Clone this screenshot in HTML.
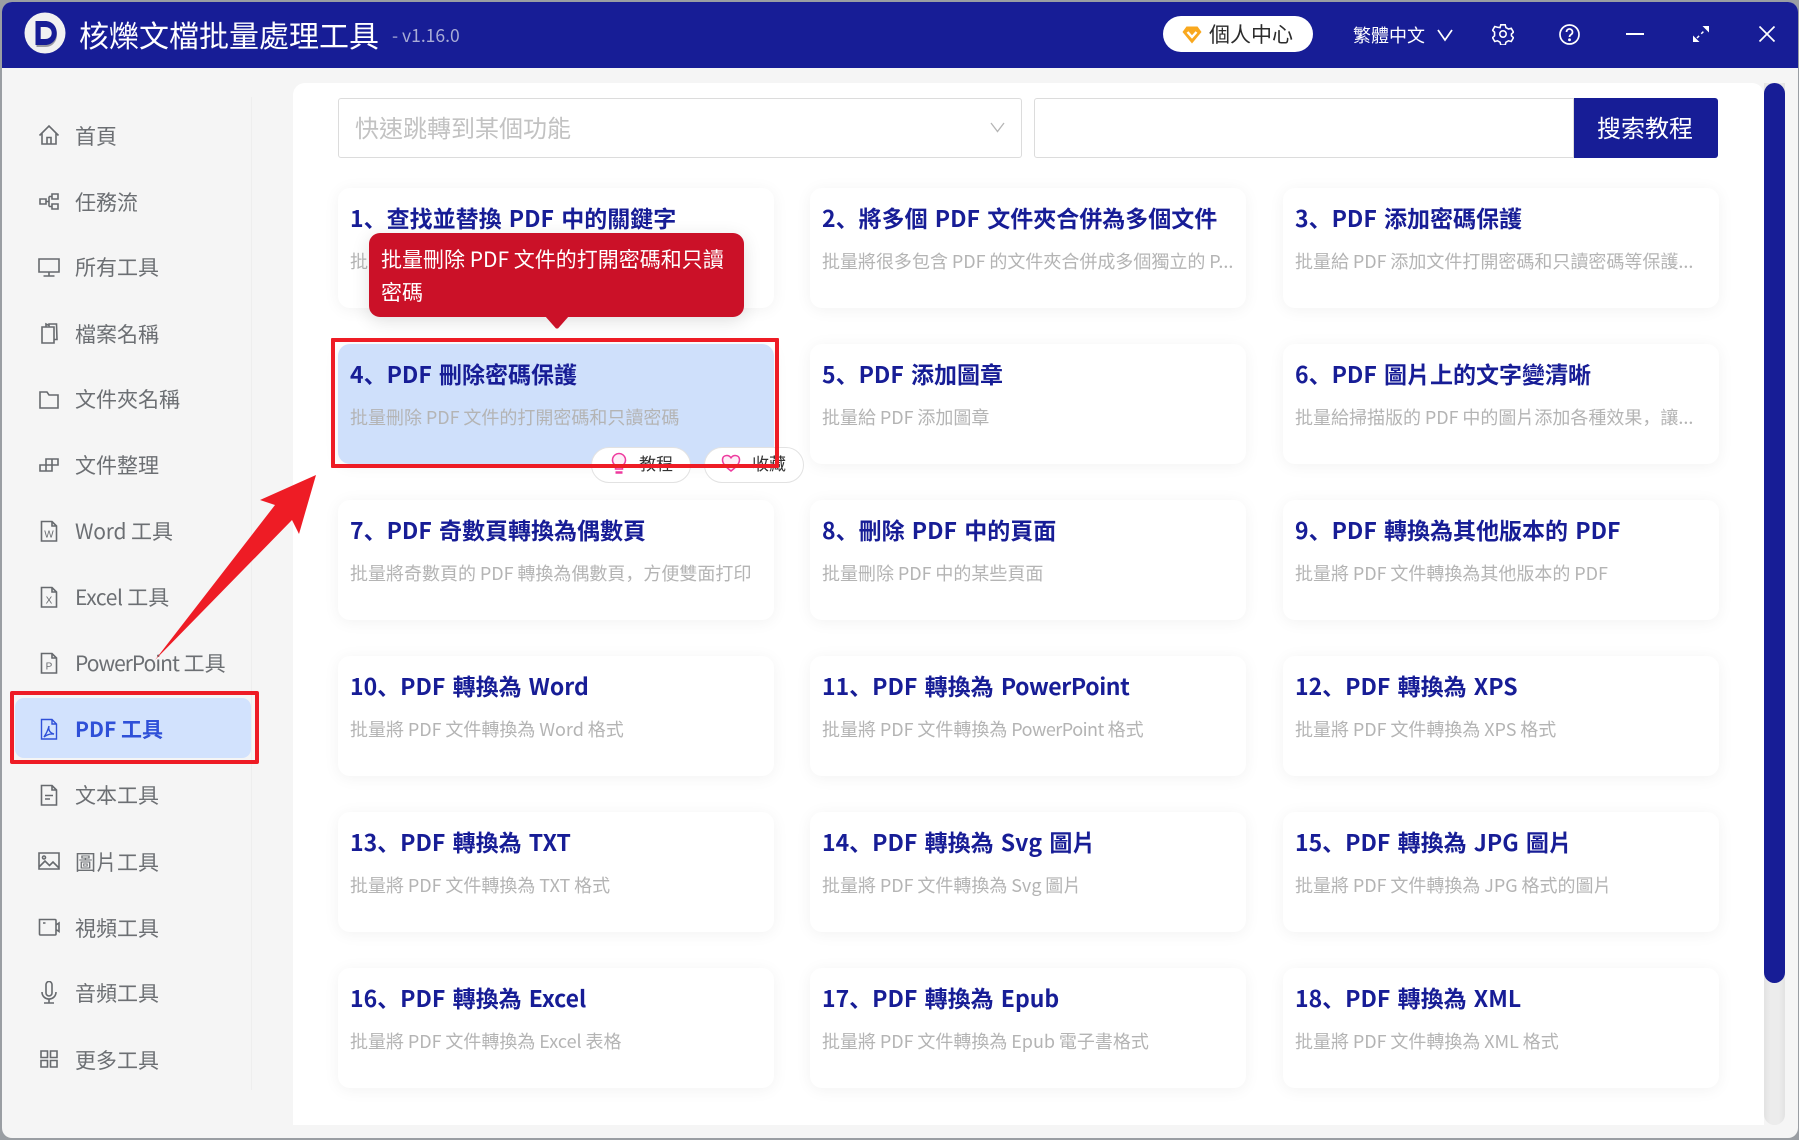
<!DOCTYPE html>
<html lang="zh-TW">
<head>
<meta charset="utf-8">
<title>核爍文檔批量處理工具</title>
<style>
*{box-sizing:border-box;margin:0;padding:0}
html,body{width:1799px;height:1140px;overflow:hidden;background:#9a9ea3}
body{position:relative;font-family:"Noto Sans CJK TC","Liberation Sans",sans-serif}
#win{position:absolute;left:2px;top:2px;width:1796px;height:1136px;background:#f5f5f5;border-radius:10px;overflow:hidden}
#hdr{position:absolute;left:2px;top:2px;width:1796px;height:66px;background:#171d96;border-radius:10px 10px 0 0}
.t{position:absolute;white-space:nowrap;line-height:1}
#panel{position:absolute;left:293px;top:83px;width:1471px;height:1042px;background:#fff;border-radius:12px 12px 0 0;overflow:hidden}
.card{position:absolute;width:436px;height:120px;background:#fff;border-radius:12px;box-shadow:0 2px 16px rgba(0,0,0,.055)}
.card b{position:absolute;left:12px;top:14px;font-size:23px;line-height:30px;font-weight:700;color:#171d96;white-space:nowrap;word-spacing:2px}
.card span{position:absolute;left:12px;top:60px;font-size:18px;line-height:26px;color:#b4b4b4;white-space:nowrap;word-spacing:-.2px}
.card i{font-style:normal;font-family:"Noto Sans CJK JP",sans-serif}
.card u{text-decoration:none}
.nav{position:absolute;left:75px;font-size:21px;line-height:30px;color:#6c6f73;white-space:nowrap;font-weight:400}
.ic{position:absolute;left:37px;width:24px;height:24px;fill:none;stroke:#676a6e;stroke-width:1.6}
.hi{position:absolute;fill:none;stroke:#fff;stroke-width:1.7}
.pill{position:absolute;height:36px;background:#fff;border:1px solid #e2e2e2;border-radius:18px}
</style>
</head>
<body>
<div id="win"></div>
<div id="hdr"></div>

<!-- logo -->
<svg style="position:absolute;left:24px;top:12px" width="42" height="42" viewBox="0 0 42 42">
<circle cx="21" cy="21" r="20.500" fill="#f1f1f1"/>
<path d="M12.500 11h9c7 0 11.500 4.700 11.500 11.500S28.500 35 21.500 35h-9z" fill="#9a9aa2"/>
<path d="M11.500 9h9.500c7 0 11.700 5 11.700 12S28 33 21 33h-9.500z" fill="#171d96"/>
<path d="M16.700 15h4.300c4 0 6.700 2.400 6.700 6s-2.700 6-6.700 6h-4.300z" fill="#f1f1f1"/>
</svg>
<div class="t" style="left:79px;top:19px;font-size:30px;color:#fff">核爍文檔批量處理工具</div>
<div class="t" style="left:392px;top:27px;font-size:17.500px;color:#a9acd6">- v1.16.0</div>

<!-- account pill -->
<div style="position:absolute;left:1163px;top:16px;width:150px;height:36px;background:#fff;border-radius:18px"></div>
<svg style="position:absolute;left:1182px;top:25px" width="20" height="20" viewBox="0 0 20 20">
<path d="M4.500 1.500h11l4 5.500L10 18.500.5 7z" fill="#f9a81e"/>
<path d="M5.500 7L10 12l4.500-5" fill="none" stroke="#fff" stroke-width="2.400"/>
</svg>
<div class="t" style="left:1209px;top:24px;font-size:21px;color:#2b2b2b">個人中心</div>

<div class="t" style="left:1353px;top:26px;font-size:18px;color:#fff">繁體中文</div>
<svg class="hi" style="left:1436px;top:28px" width="18" height="14" viewBox="0 0 18 14"><path d="M2 2l7 10 7-10"/></svg>
<!-- gear -->
<svg class="hi" style="left:1492px;top:23px" width="22" height="22" viewBox="0 0 24 24">
<path d="M9.600 2h4.800l.8 3 2.800 1.600 3-.8 2.400 4.200-2.200 2v2l2.200 2-2.400 4.200-3-.8-2.800 1.600-.8 3H9.600l-.8-3-2.800-1.600-3 .8L.6 16l2.200-2v-4L.6 8l2.400-4.200 3 .8L8.800 5z"/>
<circle cx="12" cy="12" r="3.500"/>
</svg>
<!-- help -->
<svg class="hi" style="left:1559px;top:24px" width="21" height="21" viewBox="0 0 21 21">
<circle cx="10.500" cy="10.500" r="9.500"/>
<path d="M7.500 8a3 3 0 1 1 4.600 2.500c-1.100.7-1.600 1.300-1.600 2.500"/>
<circle cx="10.500" cy="15.800" r=".6" fill="#fff"/>
</svg>
<!-- min -->
<svg class="hi" style="left:1626px;top:32px" width="18" height="4" viewBox="0 0 18 4"><path d="M0 2h18" stroke-width="2"/></svg>
<!-- expand -->
<svg style="position:absolute;left:1692px;top:25px" width="18" height="18" viewBox="0 0 18 18">
<path d="M5 13L13 5" stroke="#fff" stroke-width="1.500" stroke-dasharray="3 3"/>
<path d="M10.500 1H17v6.500z M1 10.500V17h6.500z" fill="#fff"/>
</svg>
<!-- close -->
<svg class="hi" style="left:1759px;top:26px" width="16" height="16" viewBox="0 0 16 16"><path d="M.5.500l15 15M15.500.500l-15 15"/></svg>

<!-- sidebar divider -->
<div style="position:absolute;left:251px;top:97px;width:1px;height:993px;background:#eeeeee"></div>

<!-- sidebar -->
<svg class="ic" style="top:123px" viewBox="0 0 24 24"><path d="M2.500 12.500L12 3l9.500 9.500M5 10.500V21h14V10.500M10 21v-6.500h4V21"/></svg>
<div class="nav" style="top:121px">首頁</div>
<svg class="ic" style="top:189px" viewBox="0 0 24 24"><path d="M3 10h6v5H3zM15 5h6v5h-6zM15 15h6v5h-6zM9 12.500h3M12 7.500v10M12 7.500h3M12 17.500h3"/></svg>
<div class="nav" style="top:187px">任務流</div>
<svg class="ic" style="top:255px" viewBox="0 0 24 24"><path d="M2 4h20v13H2zM12 17v4M6.500 21h11"/></svg>
<div class="nav" style="top:252px">所有工具</div>
<svg class="ic" style="top:321px" viewBox="0 0 24 24"><path d="M5 6h12v16H5zM9 6V3l3 1.500V3h7.500l.5 15.500h-3M9 6"/></svg>
<div class="nav" style="top:319px">檔案名稱</div>
<svg class="ic" style="top:387px" viewBox="0 0 24 24"><path d="M3 5h7l2 3h9v13H3z"/></svg>
<div class="nav" style="top:384px">文件夾名稱</div>
<svg class="ic" style="top:452px" viewBox="0 0 24 24"><path d="M9 7h6v6H9zM15 7h6v6h-6zM3 13h6v6H3zM9 13h6v6H9z"/></svg>
<div class="nav" style="top:450px">文件整理</div>
<svg class="ic" style="top:519px" viewBox="0 0 24 24"><path d="M4.500 2.500H15L19.500 7v15h-15zM15 2.500V7h4.500"/><text x="12" y="18.500" font-size="10" text-anchor="middle" fill="#676a6e" stroke="none" font-family="Liberation Sans">W</text></svg>
<div class="nav" style="top:516px"><span style="letter-spacing:-.2px">Word</span> 工具</div>
<svg class="ic" style="top:585px" viewBox="0 0 24 24"><path d="M4.500 2.500H15L19.500 7v15h-15zM15 2.500V7h4.500"/><text x="12" y="18.500" font-size="10" text-anchor="middle" fill="#676a6e" stroke="none" font-family="Liberation Sans">X</text></svg>
<div class="nav" style="top:582px"><span style="letter-spacing:-.4px">Excel</span> 工具</div>
<svg class="ic" style="top:651px" viewBox="0 0 24 24"><path d="M4.500 2.500H15L19.500 7v15h-15zM15 2.500V7h4.500"/><text x="12" y="18.500" font-size="10" text-anchor="middle" fill="#676a6e" stroke="none" font-family="Liberation Sans">P</text></svg>
<div class="nav" style="top:648px"><span style="letter-spacing:-1px">PowerPoint</span> 工具</div>

<div style="position:absolute;left:15px;top:698px;width:236px;height:60px;background:#d2e2fd;border-radius:9px"></div>
<svg class="ic" style="top:717px;stroke:#2f50d8" viewBox="0 0 24 24"><path d="M4.500 2.500H15L19.500 7v15h-15zM15 2.500V7h4.500M12 9c-1 4 1 7 5 8-4-.5-7 .5-10 3 2-3 4-7 5-11z" stroke-width="1.400"/></svg>
<div class="nav" style="top:714px;color:#2f50d8;font-weight:700">PDF 工具</div>
<div style="position:absolute;left:10px;top:691px;width:249px;height:73px;border:4.500px solid #ee1c25;border-radius:2px"></div>

<svg class="ic" style="top:783px" viewBox="0 0 24 24"><path d="M4.500 2.500H15L19.500 7v15h-15zM15 2.500V7h4.500M8 12.500h8M8 16h5"/></svg>
<div class="nav" style="top:780px">文本工具</div>
<svg class="ic" style="top:849px" viewBox="0 0 24 24"><path d="M2 4h20v16H2zM2 18l6-6 4.500 4.500 3.500-3.500 6 6"/><circle cx="7" cy="8.500" r="1.500"/></svg>
<div class="nav" style="top:847px">圖片工具</div>
<svg class="ic" style="top:915px" viewBox="0 0 24 24"><path d="M2.500 4.500h15.500a1 1 0 0 1 1 1V19a1 1 0 0 1-1 1H3.500a1 1 0 0 1-1-1zM19 10l3-2v8.500l-3-2M6 8h2.500"/></svg>
<div class="nav" style="top:913px">視頻工具</div>
<svg class="ic" style="top:981px" viewBox="0 0 24 24"><path d="M9 3.500a3 3 0 0 1 6 0V12a3 3 0 0 1-6 0zM5 11c0 4 3 7 7 7s7-3 7-7M12 18v4M7 22h10"/></svg>
<div class="nav" style="top:978px">音頻工具</div>
<svg class="ic" style="top:1047px" viewBox="0 0 24 24"><path d="M4 4h6.500v6.500H4zM13.500 4H20v6.500h-6.500zM4 13.500h6.500V20H4zM13.500 13.500H20V20h-6.500z"/></svg>
<div class="nav" style="top:1045px">更多工具</div>

<!-- panel -->
<div id="panel">
  <div style="position:absolute;left:45px;top:15px;width:684px;height:60px;background:#fff;border:1px solid #dcdcdc;border-radius:3px"></div>
  <div class="t" style="left:62px;top:32px;font-size:24px;color:#c2c2c2">快速跳轉到某個功能</div>
  <svg style="position:absolute;left:697px;top:39px" width="15" height="11" viewBox="0 0 15 11"><path d="M1 1l6.500 8.500L14 1" fill="none" stroke="#b5b5b5" stroke-width="1.300"/></svg>
  <div style="position:absolute;left:741px;top:15px;width:540px;height:60px;background:#fff;border:1px solid #dcdcdc;border-radius:3px 0 0 3px"></div>
  <div style="position:absolute;left:1281px;top:15px;width:144px;height:60px;background:#171d96;border-radius:0 3px 3px 0"></div>
  <div class="t" style="left:1304px;top:32px;font-size:24px;color:#fff">搜索教程</div>

  <div class="card" style="left:45px;top:105px"><b>1<i lang="ja">、</i>查找並替換 PDF 中的關鍵字</b><span>批</span></div>
  <div class="card" style="left:517px;top:105px"><b>2<i lang="ja">、</i>將多個 PDF 文件夾合併為多個文件</b><span>批量將很多包含 PDF 的文件夾合併成多個獨立的 P...</span></div>
  <div class="card" style="left:990px;top:105px"><b>3<i lang="ja">、</i>PDF 添加密碼保護</b><span>批量給 PDF 添加文件打開密碼和只讀密碼等保護...</span></div>

  <div class="card" style="left:45px;top:261px;background:#cfe0fb"><b>4<i lang="ja">、</i>PDF 刪除密碼保護</b><span>批量刪除 PDF 文件的打開密碼和只讀密碼</span></div>
  <div class="card" style="left:517px;top:261px"><b>5<i lang="ja">、</i>PDF 添加圖章</b><span>批量給 PDF 添加圖章</span></div>
  <div class="card" style="left:990px;top:261px"><b>6<i lang="ja">、</i>PDF 圖片上的文字變清晰</b><span>批量給掃描版的 PDF 中的圖片添加各種效果<i lang="ja">，</i>讓...</span></div>

  <div class="card" style="left:45px;top:417px"><b>7<i lang="ja">、</i>PDF 奇數頁轉換為偶數頁</b><span>批量將奇數頁的 PDF 轉換為偶數頁<i lang="ja">，</i>方便雙面打印</span></div>
  <div class="card" style="left:517px;top:417px"><b>8<i lang="ja">、</i>刪除 PDF 中的頁面</b><span>批量刪除 PDF 中的某些頁面</span></div>
  <div class="card" style="left:990px;top:417px"><b>9<i lang="ja">、</i>PDF 轉換為其他版本的 PDF</b><span>批量將 PDF 文件轉換為其他版本的 PDF</span></div>

  <div class="card" style="left:45px;top:573px"><b>10<i lang="ja">、</i>PDF 轉換為 Word</b><span>批量將 PDF 文件轉換為 Word 格式</span></div>
  <div class="card" style="left:517px;top:573px"><b>11<i lang="ja">、</i>PDF 轉換為 <u style="letter-spacing:-.4px">PowerPoint</u></b><span>批量將 PDF 文件轉換為 <u style="letter-spacing:-.5px">PowerPoint</u> 格式</span></div>
  <div class="card" style="left:990px;top:573px"><b>12<i lang="ja">、</i>PDF 轉換為 XPS</b><span>批量將 PDF 文件轉換為 XPS 格式</span></div>

  <div class="card" style="left:45px;top:729px"><b>13<i lang="ja">、</i>PDF 轉換為 TXT</b><span>批量將 PDF 文件轉換為 TXT 格式</span></div>
  <div class="card" style="left:517px;top:729px"><b>14<i lang="ja">、</i>PDF 轉換為 Svg 圖片</b><span>批量將 PDF 文件轉換為 Svg 圖片</span></div>
  <div class="card" style="left:990px;top:729px"><b>15<i lang="ja">、</i>PDF 轉換為 JPG 圖片</b><span>批量將 PDF 文件轉換為 JPG 格式的圖片</span></div>

  <div class="card" style="left:45px;top:885px"><b>16<i lang="ja">、</i>PDF 轉換為 Excel</b><span>批量將 PDF 文件轉換為 Excel 表格</span></div>
  <div class="card" style="left:517px;top:885px"><b>17<i lang="ja">、</i>PDF 轉換為 Epub</b><span>批量將 PDF 文件轉換為 Epub 電子書格式</span></div>
  <div class="card" style="left:990px;top:885px"><b>18<i lang="ja">、</i>PDF 轉換為 XML</b><span>批量將 PDF 文件轉換為 XML 格式</span></div>

  <div class="card" style="left:45px;top:1041px;height:1px;border-radius:0"></div>
  <div class="card" style="left:517px;top:1041px;height:1px;border-radius:0"></div>
  <div class="card" style="left:990px;top:1041px;height:1px;border-radius:0"></div>
</div>

<!-- scrollbar -->
<div style="position:absolute;left:1764px;top:83px;width:21px;height:1042px;background:linear-gradient(90deg,#e2e2e2,#ececec 30%,#ececec 70%,#e2e2e2);border-radius:0 0 11px 11px"></div>
<div style="position:absolute;left:1764px;top:83px;width:21px;height:900px;background:#171d96;border-radius:11px"></div>

<!-- tooltip -->
<div style="position:absolute;left:369px;top:233px;width:375px;height:84px;background:#cb1128;border-radius:11px;box-shadow:0 4px 18px rgba(0,0,0,.12)"></div>
<svg style="position:absolute;left:543px;top:316px" width="28" height="13" viewBox="0 0 28 13"><path d="M2 0h24l-11 12.500h-2z" fill="#cb1128"/></svg>
<div class="t" style="left:381px;top:249px;font-size:21px;color:#fff">批量刪除 PDF 文件的打開密碼和只讀</div>
<div class="t" style="left:381px;top:282px;font-size:21px;color:#fff">密碼</div>

<!-- pills -->
<div class="pill" style="left:591px;top:447px;width:100px"></div>
<svg style="position:absolute;left:610px;top:452px" width="18" height="24" viewBox="0 0 18 24">
<path d="M9 1.500a6.500 6.500 0 0 1 3.500 12V17h-7v-3.500A6.500 6.500 0 0 1 9 1.500z" fill="#fdeef7" stroke="#ee3a9e" stroke-width="1.500"/><path d="M5.500 20.500h7" stroke="#ee3a9e" stroke-width="2.500"/>
</svg>
<div class="t" style="left:639px;top:454px;font-size:17px;color:#333">教程</div>
<div class="pill" style="left:704px;top:447px;width:100px"></div>
<svg style="position:absolute;left:721px;top:453px" width="20" height="20" viewBox="0 0 20 20">
<path d="M10 18C5 14 1.500 11 1.500 6.800 1.500 4 3.500 2.500 5.800 2.500c1.800 0 3.300 1 4.200 2.300.9-1.300 2.400-2.300 4.200-2.300 2.300 0 4.300 1.500 4.300 4.300C18.500 11 15 14 10 18z" fill="#fdeef7" stroke="#ee3a9e" stroke-width="1.500"/>
</svg>
<div class="t" style="left:752px;top:454px;font-size:17px;color:#333">收藏</div>

<!-- annotation box -->
<div style="position:absolute;left:331px;top:338px;width:448px;height:130px;border:4.500px solid #ee1c25;border-radius:1px"></div>

<!-- arrow -->
<svg style="position:absolute;left:0;top:0;pointer-events:none" width="1799" height="1140" viewBox="0 0 1799 1140">
<polygon points="316,475 260,500 275,505 155,660 292,520 299,534" fill="#ee1c25"/>
</svg>
</body>
</html>
